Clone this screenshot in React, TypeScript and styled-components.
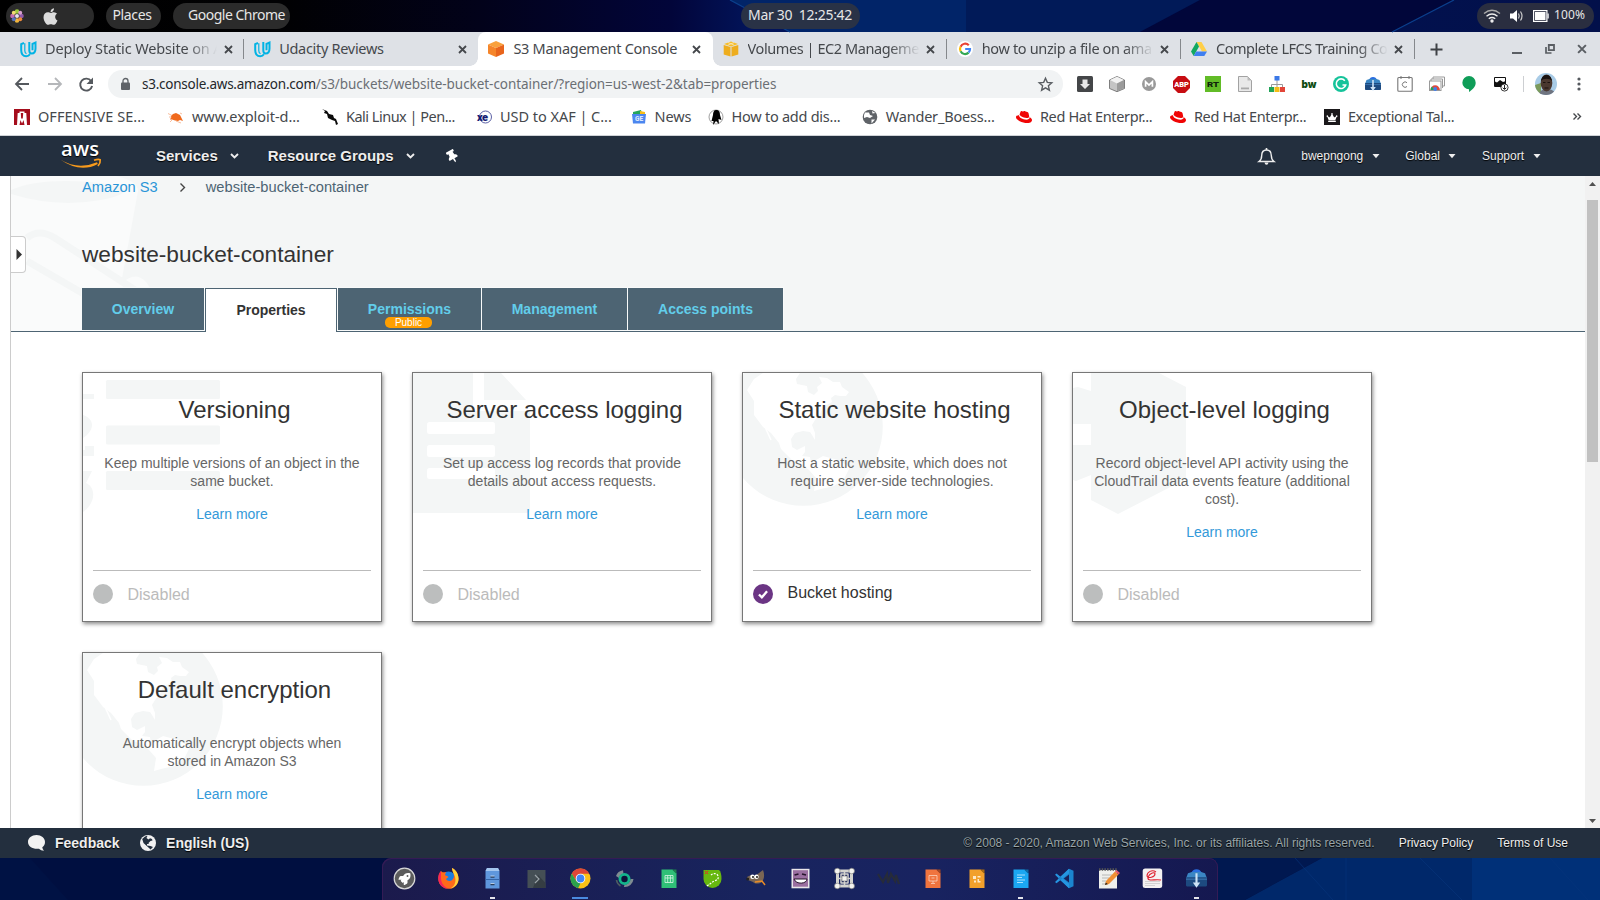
import React, { ReactNode } from "react";
import styled, { createGlobalStyle, css } from "styled-components";
import { FaApple, FaThumbtack, FaRedhat, FaCrown, FaRocket } from "react-icons/fa";

const sans = '"Liberation Sans", Arial, sans-serif';
const ui = '"Noto Sans", "Open Sans", sans-serif';

const GlobalStyle = createGlobalStyle`
  * { box-sizing: border-box; }
  html, body { margin: 0; padding: 0; overflow: hidden; }
  svg { display: block; flex: none; overflow: visible; }
`;

const Desktop = styled.div`
  width: 1600px;
  height: 900px;
  display: flex;
  flex-direction: column;
  overflow: hidden;
  background: #000a35;
  font-family: ${sans};
`;

const Label = styled.span<{ $ls?: number }>`
  white-space: pre;
  letter-spacing: ${(p) => p.$ls ?? 0}px;
`;

/* ---------- system bar ---------- */
const SystemBar = styled.div`
  position: relative;
  height: 32px;
  flex: none;
  display: flex;
  align-items: flex-start;
  padding: 3px 6px 0;
  font: 14px/24px ${ui};
  color: #e6e6e6;
`;
const Backdrop = styled.svg`
  position: absolute;
  inset: 0;
`;
const Pill = styled.div<{ $w: number; $ml?: number; $pl: number; $bg?: string }>`
  position: relative;
  display: flex;
  align-items: center;
  flex: none;
  width: ${(p) => p.$w}px;
  height: 26px;
  margin-left: ${(p) => p.$ml ?? 0}px;
  padding-left: ${(p) => p.$pl}px;
  border-radius: 13px;
  background: ${(p) => p.$bg ?? "#2b2b2b"};
  > span { margin-bottom: 2px; }
`;
const AppleIcon = styled(FaApple)`
  margin-left: 17px;
`;
const StatusIcons = styled.div`
  display: flex;
  align-items: center;
  gap: 9px;
  margin-right: 5px;
`;
const Percent = styled(Label)`
  font-size: 12px;
`;

/* ---------- browser chrome ---------- */
const TabStrip = styled.div`
  height: 34px;
  flex: none;
  display: flex;
  align-items: center;
  padding-left: 10px;
  background: #dee1e6;
  font: 14.5px/34px ${ui};
  color: #45484c;
`;
const Tab = styled.div<{ $active?: boolean; $line?: boolean }>`
  position: relative;
  width: 234.2px;
  height: 34px;
  flex: none;
  display: flex;
  align-items: center;
  padding-left: 10px;
  ${(p) =>
    p.$line &&
    css`
      &::after {
        content: "";
        position: absolute;
        right: 0;
        top: 7px;
        width: 1px;
        height: 20px;
        background: #85888c;
      }
    `}
  ${(p) =>
    p.$active &&
    css`
      background: #fff;
      border-radius: 8px 8px 0 0;
      &::before,
      &::after {
        content: "";
        position: absolute;
        bottom: 0;
        width: 8px;
        height: 8px;
      }
      &::before {
        left: -8px;
        background: radial-gradient(circle at 0 0, transparent 7.5px, #fff 8px);
      }
      &::after {
        right: -8px;
        background: radial-gradient(circle at 100% 0, transparent 7.5px, #fff 8px);
      }
    `}
`;
const Favicon = styled.div`
  width: 17px;
  flex: none;
`;
const TabTitle = styled.div<{ $fade?: boolean }>`
  width: 178.5px;
  margin-left: 8px;
  overflow: hidden;
  height: 34px;
  line-height: 32px;
  white-space: nowrap;
  ${(p) => p.$fade && css`mask-image: linear-gradient(90deg, #000 142px, transparent 172px);`}
`;
const WindowButtons = styled.div`
  flex: 1;
  display: flex;
  align-items: center;
  justify-content: space-between;
  padding: 0 13px 0 15px;
`;
const ButtonGroup = styled.div<{ $gap: number }>`
  display: flex;
  align-items: center;
  gap: ${(p) => p.$gap}px;
`;
const Toolbar = styled.div`
  height: 36px;
  flex: none;
  display: flex;
  align-items: center;
  background: #fff;
  padding: 0 19.5px 0 14px;
`;
const Omnibox = styled.div`
  width: 955px;
  height: 28px;
  margin-left: 14px;
  border-radius: 14px;
  background: #f1f3f4;
  display: flex;
  align-items: center;
  padding: 0 10.5px 0 13px;
  font: 13.5px/27px ${ui};
  color: #6b6f74;
`;
const Url = styled.div`
  flex: 1;
  margin-left: 12px;
  b { font-weight: 400; color: #24272b; }
`;
const Extensions = styled.div`
  display: grid;
  grid-template-columns: repeat(14, 32px);
  justify-items: center;
  align-items: center;
  margin-left: 6px;
`;
const Divider = styled.div`
  width: 1px;
  height: 16px;
  margin: 0 11px 0 6px;
  background: #cdcfd2;
`;
const Spacer = styled.div`
  flex: 1;
`;
const Bookmarks = styled.div`
  height: 34px;
  flex: none;
  display: flex;
  align-items: center;
  padding: 0 19px 4px 14px;
  background: #fff;
  border-bottom: 1px solid #d0d3d7;
  font: 14.5px/27px ${ui};
  color: #45484c;
`;
const Bookmark = styled.div<{ $w: number }>`
  display: flex;
  align-items: center;
  width: ${(p) => p.$w}px;
  flex: none;
  gap: 8px;
`;
const BookmarkIcon = styled.div`
  width: 16px;
  flex: none;
`;

/* ---------- console navigation ---------- */
const Nav = styled.div`
  height: 40px;
  flex: none;
  display: flex;
  align-items: center;
  background: #232f3e;
  padding: 0 59.5px 0 60px;
  color: #eee;
  text-shadow: 0 1px 1px #000;
`;
const NavMain = styled.div<{ $ml: number }>`
  display: flex;
  align-items: center;
  gap: 12px;
  margin-left: ${(p) => p.$ml}px;
  font: bold 15px/40px ${sans};
`;
const Pin = styled(FaThumbtack)`
  margin-left: 31.5px;
  transform: rotate(-30deg);
`;
const NavRight = styled.div`
  flex: 1;
  display: flex;
  justify-content: flex-end;
  align-items: center;
  gap: 25.5px;
  font: 12px/42px ${sans};
`;
const NavLink = styled.div`
  display: flex;
  align-items: center;
  gap: 8.5px;
`;

/* ---------- console page ---------- */
const Body = styled.div`
  height: 652px;
  flex: none;
  display: flex;
  background: #fff;
  overflow: hidden;
`;
const Page = styled.div`
  position: relative;
  width: 1575px;
  margin-left: 10px;
  border-left: 1px solid #ccc;
  overflow: hidden;
`;
const Handle = styled.div`
  position: absolute;
  left: -1px;
  top: 60px;
  width: 16px;
  height: 37px;
  background: #fff;
  border: 1px solid #ccc;
  border-left: 0;
  border-radius: 0 4px 4px 0;
  padding: 12px 0 0 6px;
`;
const Header = styled.div`
  position: relative;
  height: 156px;
  background: #f4f6f6;
  border-bottom: 1px solid #4d6473;
  padding-left: 71px;
  color: #333;
`;
const Bucket = styled.svg`
  position: absolute;
  left: 0;
  top: 0;
`;
const Crumbs = styled.div`
  position: relative;
  display: flex;
  align-items: center;
  height: 22px;
  font: 14.67px/22px ${sans};
  color: #4d6473;
  a { color: #2a95d8; }
  svg { margin: 0 20px 0 21px; }
`;
const BucketName = styled.div`
  position: relative;
  margin-top: 40px;
  height: 50px;
  font: 22.67px/32px ${sans};
`;
const TabRow = styled.div`
  position: relative;
  display: flex;
  gap: 1px;
  height: 44px;
`;
const PageTab = styled.div<{ $w: number; $active?: boolean }>`
  width: ${(p) => p.$w}px;
  height: 42px;
  display: flex;
  flex-direction: column;
  align-items: center;
  background: #4d6473;
  outline: 1px solid #f8fafa;
  color: #62cdea;
  font: bold 14px/42px ${sans};
  ${(p) =>
    p.$active &&
    css`
      height: 44px;
      background: #fff;
      color: #333;
      border: 1px solid #4d6473;
      border-bottom: 0;
      outline: 0;
      z-index: 1;
    `}
`;
const Badge = styled.span`
  margin: -13px 2px 0 0;
  width: 47px;
  height: 11px;
  border-radius: 5px;
  background: #ff9f00;
  color: #fff;
  font: 10px/11px ${sans};
  text-align: center;
`;
const Cards = styled.div`
  display: grid;
  grid-template-columns: repeat(4, 300px);
  gap: 30px;
  padding: 40px 0 0 71px;
`;
const Card = styled.div`
  position: relative;
  height: 250px;
  border: 1px solid #777;
  box-shadow: 1px 2px 4px rgba(0, 0, 0, 0.45);
  display: flex;
  flex-direction: column;
  background: #fff;
  padding: 0 10px;
`;
const Watermark = styled.svg`
  position: absolute;
  left: 0;
  top: 0;
  overflow: hidden;
  fill: #f4f6f6;
`;
const CardTitle = styled.div`
  position: relative;
  margin-top: 21px;
  padding-left: 5px;
  font: 24px/32px ${sans};
  color: #333;
  text-align: center;
`;
const CardText = styled.div`
  position: relative;
  margin-top: 28px;
  font: 14px/18px ${sans};
  color: #666;
  text-align: center;
  white-space: pre;
`;
const Learn = styled.div`
  position: relative;
  margin-top: 15px;
  font: 14px/18px ${sans};
  color: #3399d9;
  text-align: center;
`;
const Status = styled.div<{ $on?: boolean }>`
  position: relative;
  margin-top: auto;
  height: 51px;
  display: flex;
  gap: 14.5px;
  padding-top: 13px;
  border-top: 1px solid #bbb;
  font: 16px/20px ${sans};
  color: ${(p) => (p.$on ? "#333" : "#bbb")};
  span { margin-top: ${(p) => (p.$on ? -1 : 1)}px; }
`;
const Dot = styled.div<{ $on?: boolean }>`
  width: 20px;
  height: 20px;
  border-radius: 50%;
  background: ${(p) => (p.$on ? "#6b3584" : "#bcbebe")};
  padding: 5.5px 0 0 5px;
`;
const Scrollbar = styled.div`
  width: 15px;
  display: flex;
  flex-direction: column;
  align-items: center;
  background: #f1f1f1;
  padding: 6px 0 5px;
`;
const Thumb = styled.div`
  width: 11px;
  height: 262px;
  margin: 14px 0 auto;
  background: #c1c1c1;
`;

/* ---------- footer and dock ---------- */
const Footer = styled.div`
  height: 30px;
  flex: none;
  display: flex;
  align-items: center;
  background: #232f3e;
  padding: 0 32px 0 28px;
  color: #eee;
  font: 12px/30px ${sans};
  text-shadow: 0 1px 1px #000;
`;
const FootLink = styled.div<{ $mr?: number }>`
  display: flex;
  align-items: center;
  gap: 10px;
  margin-right: ${(p) => p.$mr ?? 0}px;
  font: bold 14px/30px ${sans};
`;
const Legal = styled.div`
  flex: 1;
  display: flex;
  justify-content: flex-end;
  gap: 24px;
`;
const Muted = styled.span`
  color: #9aa5a8;
`;
const DockArea = styled.div`
  position: relative;
  flex: 1;
  display: flex;
  justify-content: center;
  overflow: hidden;
`;
const Dock = styled.div`
  position: relative;
  width: 836px;
  height: 42px;
  display: grid;
  grid-template-columns: repeat(19, 44px);
  border-radius: 9px 9px 0 0;
  box-shadow: inset 1px 1px 0 #341b55, inset -1px 0 0 #341b55;
  background: linear-gradient(90deg, #1b1a4c, #18245e 45%, #182360 65%, #151850);
`;
const DockItem = styled.div<{ $mark?: string }>`
  display: flex;
  flex-direction: column;
  align-items: center;
  justify-content: space-between;
  padding: 10px 0 1px;
  &::after {
    content: "";
    width: ${(p) => (p.$mark === "wide" ? 16 : 5)}px;
    height: 2px;
    background: ${(p) => (p.$mark === "wide" ? "#4a8ae0" : p.$mark ? "#e4e4ea" : "transparent")};
  }
`;

/* ---------- shared drawings ---------- */
const Close = ({ c = "#45484c", s = 9 }: { c?: string; s?: number }) => (
  <svg width={s} height={s} viewBox="0 0 9 9">
    <path d="M1 1l7 7M8 1l-7 7" stroke={c} strokeWidth="1.8" />
  </svg>
);
const Udacity = () => (
  <svg width="17" height="17" viewBox="0 0 17 17" fill="none" stroke="#02b3e4" strokeWidth="2">
    <path d="M4 2L1.200 3.200v5.800c0 4 2 6.300 5 6.300 1.800 0 3-.8 3.700-2" />
    <path d="M4.800 2.200v7.500c0 1.500.6 2.500 1.700 3" strokeWidth="1.200" />
    <path d="M9.300 1v8.300c0 2 .8 3.200 2.300 3.200 2.400 0 3.900-2 3.900-5V1.500l-3 1.300v6.500" />
  </svg>
);
const Cube = ({ a, b, c }: { a: string; b: string; c: string }) => (
  <svg width="16" height="16" viewBox="0 0 16 16">
    <path d="M8 0l8 3.500L8 7 0 3.500z" fill={a} />
    <path d="M0 3.500L8 7v9l-8-3.500z" fill={b} />
    <path d="M16 3.500L8 7v9l8-3.500z" fill={c} />
  </svg>
);
const GoldCube = () => (
  <svg width="16" height="16" viewBox="0 0 16 16">
    <path d="M8 .5l7 2.500-7 2.500L1 3z" fill="#f6bd2b" />
    <path d="M.7 4l6.800 2v9.500L.7 13.500zM15.300 4l-6.800 2v9.500l6.800-2z" fill="#eead1e" />
    <path d="M5 1.500l6 2.600M11 1.500l-6 2.600" stroke="#fde9b4" strokeWidth=".8" />
  </svg>
);
const GoogleG = () => (
  <svg width="16" height="16" viewBox="0 0 16 16">
    <circle cx="8" cy="8" r="8" fill="#fff" />
    <g fill="none" strokeWidth="2.200">
      <path d="M11.800 4.200A5 5 0 0 0 3.600 5.700" stroke="#ea4335" />
      <path d="M3.600 5.700a5 5 0 0 0 0 4.600" stroke="#fbbc05" />
      <path d="M3.600 10.300a5 5 0 0 0 8 1.300" stroke="#34a853" />
      <path d="M11.600 11.600A5 5 0 0 0 13 8H8.200" stroke="#4285f4" />
    </g>
  </svg>
);
const Drive = () => (
  <svg width="16" height="16" viewBox="0 0 16 16">
    <path d="M5.500 1h5L16 10.500h-5z" fill="#ffcf48" />
    <path d="M5.500 1L8 5.400 2.700 15 0 10.500z" fill="#11a861" />
    <path d="M5.200 10.500H16L13.300 15H2.700z" fill="#3f7ff0" />
  </svg>
);
const Chevron = () => (
  <svg width="9" height="6" viewBox="0 0 9 6">
    <path d="M1 1l3.500 3.500L8 1" fill="none" stroke="#eee" strokeWidth="1.900" />
  </svg>
);
const Caret = () => (
  <svg width="8" height="5" viewBox="0 0 8 5">
    <path d="M.5 0h7L4 4.200z" fill="#eee" />
  </svg>
);
const RedHat = () => <FaRedhat size={16} color="#f00505" />;

const continents =
  "M4 17L11 6 20 0H57L53 6 54 11 64 13 65 19 71 22 75 18 74 14 79 10 76 4 84 5 90 9 97 9 99 14 106 19 103 23 97 23 92 22 88 25 89 29 80 34 77 41 72 47 69 52 72 60 72 67 69 62 67 59 60 58 52 60 48 66 49 74 54 77 58 75 62 73 62 79 59 83 67 84 68 90 80 83 95 87 107 94 101 106 91 113 78 116 71 118 73 105 66 97 59 91 50 88 44 82 38 76 36 70 28 60 20 54 11 42 11 28z";

const GlobeMark = () => (
  <Watermark width="150" height="150" viewBox="0 0 150 150">
    <circle cx="60.300" cy="53.300" r="79.500" />
    <path d={continents} fill="#fff" />
    <path d="M22 54l6 13" stroke="#fff" strokeWidth="1.500" />
  </Watermark>
);
const ListMark = () => (
  <Watermark width="150" height="150" viewBox="0 0 150 150">
    <rect x="23" y="7" width="114" height="19" rx="1.500" />
    <rect x="23" y="52.500" width="114" height="19" rx="1.500" />
    <rect x="23" y="98" width="114" height="19" rx="1.500" />
    <path d="M0 21h11v5H0zM0 42c12 4 12 15 0 23zM0 77h2v-4h9v10H0zM0 98h9L3 110c11 5 9 21-3 29zM0 115l3 1-3 3z" />
  </Watermark>
);
const DocMark = () => (
  <Watermark width="150" height="150" viewBox="0 0 150 150">
    <path d="M0 0h60v38h57v98q0 4-4 4H0zM71 0h17l25 27H71z" />
    <g fill="#fff">
      <rect x="14" y="49" width="68" height="12" rx="2.500" />
      <rect x="14" y="72" width="68" height="12" rx="2.500" />
      <rect x="14" y="95" width="68" height="11" rx="2.500" />
    </g>
  </Watermark>
);
const CubeMark = () => (
  <Watermark width="150" height="150" viewBox="0 0 150 150">
    <path d="M18 0h68l27 14v92l-68 35-27-14v-25l-15 6-3-1V72h18V51H0V15l5-1 13 4z" />
  </Watermark>
);

const cards: { title: string; text: string; mark: ReactNode; on?: boolean }[] = [
  { title: "Versioning", text: "Keep multiple versions of an object in the\nsame bucket.", mark: <ListMark /> },
  { title: "Server access logging", text: "Set up access log records that provide\ndetails about access requests.", mark: <DocMark /> },
  { title: "Static website hosting", text: "Host a static website, which does not\nrequire server-side technologies.", mark: <GlobeMark />, on: true },
  { title: "Object-level logging", text: "Record object-level API activity using the\nCloudTrail data events feature (additional\ncost).", mark: <CubeMark /> },
  { title: "Default encryption", text: "Automatically encrypt objects when\nstored in Amazon S3", mark: <GlobeMark /> },
];

const S = ({ children, w = 16 }: { children: ReactNode; w?: number }) => (
  <svg width={w} height={w} viewBox="0 0 16 16">{children}</svg>
);
const glyph = (t: string, x: number, y: number, size: number, fill: string, extra = {}) => (
  <text x={x} y={y} fontSize={size} fill={fill} fontFamily="Roboto, sans-serif" fontWeight={900} textAnchor="middle" {...extra}>{t}</text>
);
const Toolbox = ({ w = 16 }: { w?: number }) => (
  <S w={w}>
    <path d="M4 4q1-3 4-3t4 3z" fill="#2a6ee0" />
    <path d="M1.500 4l3-1h7l3 1L16 8H0z" fill="#3b86c4" />
    <rect x="0" y="7" width="16" height="7" rx=".8" fill="#1d4a80" />
    <path d="M0 8.500h16" stroke="#3d79b4" strokeWidth=".8" />
    <path d="M7.200 4h1.600v7h2L8 15l-2.800-4h2z" fill="#cfe3f5" />
  </S>
);

const extensions: ReactNode[] = [
  <S><rect width="16" height="16" rx="1.500" fill="#444648" /><path d="M5.500 3.500h5V8H13l-5 5-5-5h2.500z" fill="#e8e8e8" /></S>,
  <S><path d="M8 .5L15.500 4v8.500L8 15.700.5 12.500V4z" fill="#c4c4c4" stroke="#666" strokeWidth=".8" /><path d="M8 .8L15 4 8 7.500 1 4z" fill="#f2f2f2" /><path d="M8 7.500l7-3.400v8L8 15.300z" fill="#9b9b9b" /></S>,
  <S><circle cx="8" cy="8" r="7" fill="#999" /><path d="M4.600 10.800V5.700L8 9l3.400-3.300v5.100" fill="none" stroke="#fff" strokeWidth="1.700" /></S>,
  <S w={17}><path d="M4.700 0h6.600L16 4.700v6.600L11.300 16H4.700L0 11.300V4.700z" fill="#c70d12" />{glyph("ABP", 8, 10.700, 7, "#fff")}</S>,
  <S><rect width="16" height="16" fill="#62bc27" />{glyph("RT", 8, 10.700, 8, "#10240a", { textLength: 12, lengthAdjust: "spacingAndGlyphs" })}</S>,
  <S><path d="M1.500.5h9l4 4v11h-13z" fill="#e9e9e9" stroke="#999" strokeWidth=".9" /><path d="M10.500.5v4h4z" fill="#bbb" /><path d="M4 11.500h8v1.800H4z" fill="#aaa" /></S>,
  <S><path d="M8 4v4M2.500 12V8.500h11V12M8 8v4" stroke="#999" fill="none" /><rect x="5.500" y="0" width="5" height="4.500" fill="#3b78e7" /><rect x="0" y="11" width="5" height="5" fill="#20a357" /><rect x="5.500" y="11" width="5" height="5" fill="#f4bd16" /><rect x="11" y="11" width="5" height="5" fill="#e24538" /></S>,
  <S>{glyph("bw", 8, 12.300, 11, "#0f4d12", { fontFamily: "Inter, sans-serif", textLength: 15, lengthAdjust: "spacingAndGlyphs" })}</S>,
  <S><circle cx="8" cy="8" r="8" fill="#15c39a" /><path d="M11.800 4.700A4.800 4.800 0 1 0 12.700 9H9.500" fill="none" stroke="#fff" strokeWidth="1.600" /></S>,
  <Toolbox />,
  <S><rect x=".8" y="1.500" width="14.400" height="13.800" rx="1" fill="#fff" stroke="#777" strokeWidth="1.100" /><path d="M4 0v3M12 0v3" stroke="#777" /><path d="M10 6.700A2.700 2.700 0 1 0 10 10.500" fill="none" stroke="#777" /></S>,
  <S><path d="M4 3V1h11.500v9H14" fill="#fff" stroke="#999" /><path d="M2 5V3h11.500v9" fill="#fff" stroke="#999" /><rect x=".5" y="5" width="11.500" height="9.500" fill="#fff" stroke="#999" /><path d="M1.500 14a4.700 4.700 0 0 1 9.400 0z" fill="#dd4b3e" /><path d="M1.500 14a4.700 4.700 0 0 1 1.500-3.500L5 14z" fill="#20a357" /><circle cx="6.200" cy="13" r="1.900" fill="#3f80ee" /></S>,
  <S><path d="M8 0a6.700 6.700 0 0 1 6.700 6.800C14.700 11 11 14 8 16v-2.700A6.600 6.600 0 1 1 8 0z" fill="#0f9d58" /></S>,
  <S><path d="M1.500 1.500h11v7l-3 2h-8z" fill="#fff" stroke="#111" strokeWidth="1" /><path d="M1 5l3 1.500L7 4l3 2 3-1v5H1z" fill="#111" /><circle cx="11.500" cy="11.500" r="3.600" fill="#fff" stroke="#222" strokeWidth=".9" /><path d="M11.500 9v4M9.700 11.700l1.800 1.800 1.800-1.800" stroke="#222" fill="none" /></S>,
];

/* icon, text, letter spacing, slot width */
const bookmarks: [ReactNode, string, number, number][] = [
  [<S><rect width="16" height="16" fill="#a50d1c" /><path d="M3 16l.7-12H5.500V2.500h5V4h1.800L13 16h-2.500L9.500 11 8 14.500 6.500 11 5.500 16z" fill="#fff" /><path d="M6.800 4h2.400L8.800 9.500H7.200z" fill="#a50d1c" /></S>, "OFFENSIVE SE...", 0.03, 154],
  [<S><path d="M3 7l2-2 3-1 4 2 1.500 3 1.500 3-3-1-2 1-3-.5-3-1-2 0 1-2z" fill="#f06a1d" /><path d="M0 4.500l4 2M4 11l-2 2M12 4l2 1M1 8h3M8 12l5 2" stroke="#f5a273" strokeWidth=".7" /></S>, "www.exploit-d...", -0.05, 154],
  [<S><path d="M0 0l5 2 2 3 4 1 1 3 2 1 2 5-2 1-1-4-3-1-4-2-1-4-3-1 1-2z" fill="#0a0a0a" /></S>, "Kali Linux | Pen...", -0.5, 154],
  [<S><circle cx="9.500" cy="8" r="6" fill="none" stroke="#5b60a5" />{glyph("xe", 6.500, 11.500, 11, "#161d74", { textLength: 11 })}</S>, "USD to XAF | C...", -0.03, 154.5],
  [<S><path d="M2 3l8-2 1 4H2z" fill="#25a55b" /><path d="M9 2l5 1v3H9z" fill="#f9bd16" /><path d="M1 5h14l-1 9.500H2z" fill="#4b86ef" />{glyph("GE", 8, 12, 6.500, "#dce8fd")}</S>, "News", -0.066, 77],
  [<S><circle cx="8" cy="8" r="7" fill="#fff" stroke="#888" strokeWidth=".8" /><path d="M8 1c3 0 4 2 4 5l1.500 5-3-1L11 15 8 12l-3 4 .5-4-2 0L5 6c0-3 1-5 3-5z" fill="#000" /></S>, "How to add dis...", -0.25, 154.2],
  [<S><circle cx="8" cy="8" r="7.300" fill="#5f6368" /><path d="M3 3.500h4L8 6l3 1-3 2-3-1-3 1V6z" fill="#fff" /><path d="M9.500 10.500h3.500l-3.500 4zM10 2l3.500 2-3 .5z" fill="#fff" /></S>, "Wander_Boess...", -0.19, 154.2],
  [<RedHat />, "Red Hat Enterpr...", -0.33, 154],
  [<RedHat />, "Red Hat Enterpr...", -0.33, 154],
  [<S><rect width="16" height="16" fill="#1a181a" /><g transform="translate(2.500 3)"><FaCrown size={11} color="#fff" /></g></S>, "Exceptional Tal...", -0.32, 154],
];

const docIcon = (c: string, d: string, inner: ReactNode) => (
  <svg width="21" height="21" viewBox="0 0 21 21">
    <path d="M3.500 1.500h11l4 4v14.500h-15z" fill={c} />
    <path d="M14 1.500h4.500V6z" fill={d} />
    {inner}
  </svg>
);
const D = ({ children }: { children: ReactNode }) => (
  <svg width="21" height="21" viewBox="0 0 21 21">{children}</svg>
);

const dock: [ReactNode, string?][] = [
  [<D><circle cx="10.500" cy="10.500" r="10.300" fill="#5c5c5c" stroke="#d8d8d8" strokeWidth="1.200" /><g transform="translate(4.500 5)"><FaRocket size={12} color="#fff" /></g></D>],
  [<D><circle cx="10.500" cy="11" r="7.500" fill="#1a7fe0" /><path d="M3 3C1 5 0 8 .4 12c.6 5 5 8.800 10.200 8.800 5.500 0 9.900-4.300 10-9.900C20.500 6 18 2 14 0c0 2 1 3 1.500 5 1 3 .5 6-2 7.500-2 1-4.500.5-5.500-1.500l2.500-2c-1-1.500-3-1-3.500-2l1-3C6 4 4.500 5 3 3z" fill="#ff6a1a" /><path d="M14 0c4 2 6.500 6 6.500 10.800 0 5-3.500 8.900-8 9.800 5-3 6-8 4-13C15.500 5 14 3 14 0z" fill="#ffd33a" /><path d="M3 3C1 5 0 8 .4 12c.6 5 5 8.800 10.200 8.800C6 19 3 15 3 10z" fill="#f5245a" /></D>],
  [<D><path d="M5 0h11l1.500 3v17.500h-14V3z" fill="#5f97dd" /><path d="M5 0h11l1.500 3h-14z" fill="#a4c6ef" /><path d="M3.500 11.500h14" stroke="#3566a9" /><path d="M8.500 9h4M8.500 16.500h4" stroke="#2d3f5c" strokeWidth="1.300" /><path d="M8.500 8h4M8.500 15.500h4" stroke="#dfe9f5" strokeWidth=".7" /></D>, "dot"],
  [<D><rect x="1.500" y="2" width="18" height="18" fill="#454f55" /><path d="M12 7l7.500 8v5H7z" fill="#353d43" /><path d="M9 7l4 4-4 4" fill="none" stroke="#9aa3a8" strokeWidth="1.200" /></D>],
  [<D><circle cx="10.500" cy="10.500" r="10" fill="#fbc116" /><path d="M10.500.5a10 10 0 0 1 8.800 5.200H10.500L6 13 1.800 5.600A10 10 0 0 1 10.500.500z" fill="#df4637" /><path d="M1.800 5.600L6.200 13l4.300 2.500-2.500 4.700A10 10 0 0 1 1.800 5.600z" fill="#2ba24c" /><circle cx="10.500" cy="10.500" r="4.800" fill="#fff" /><circle cx="10.500" cy="10.500" r="3.900" fill="#4285f4" /></D>, "wide"],
  [<D><path d="M9 2.300A8.700 8.700 0 0 0 2 8l3 2a6 6 0 0 1 4.500-4zM16.500 11h3a8.700 8.700 0 0 1-9.500 8l.5-2.500a6 6 0 0 0 6-5.500z" fill="#7f8c92" /><path d="M2.500 12a8 8 0 0 0 4 6" fill="none" stroke="#4f5c62" strokeWidth="1.600" /><circle cx="10.500" cy="11" r="4.600" fill="#0d1338" stroke="#14b58b" strokeWidth="2.800" /></D>],
  [docIcon("#2fc077", "#1b7f4d", <path d="M7 7.500h8v7H7zM7 10h8M9.700 7.500v7M12.400 7.500v7" fill="none" stroke="#d8f5e6" strokeWidth=".8" />)],
  [<D><path d="M1.500 2H17q2.500 2 2.500 9a9 9 0 0 1-18 0z" fill="#67b80f" /><path d="M5 18l7-5c3-1 5-2 4-5s-5-3-7-1" fill="none" stroke="#fff" strokeDasharray="2 1.200" strokeWidth="1.200" /><path d="M3 3l3 3M6 3L3 6" stroke="#e22" /></D>],
  [<D><path d="M1 9l4-2 4 1 8-6c2 5 1 9-1 12-3 2-7 2-9 0l-5-2z" fill="#7a6654" /><circle cx="6.500" cy="8.800" r="2.200" fill="#fff" /><circle cx="10.500" cy="8.800" r="2.200" fill="#fff" /><circle cx="7" cy="9" r=".9" /><circle cx="11" cy="9" r=".9" /><circle cx="1.700" cy="11" r="1.500" fill="#222" /><path d="M9 14l7-1 3 4" stroke="#e98b28" strokeWidth="1.500" fill="none" /></D>],
  [<D><rect x="1.500" y=".8" width="18" height="19.500" fill="#e9e6e9" /><rect x="3" y="2.200" width="15" height="16.500" fill="#9a6fa0" /><path d="M4.500 7l4-1M12 6l4 1" stroke="#26142b" strokeWidth="1.700" /><path d="M4 11h13c0 5-11 6-13 0z" fill="#fff" stroke="#26142b" /></D>],
  [<D><g fill="none" stroke="#d4d4cf"><path d="M3.500 3h14M3.500 18h14M3.500 3v15M17.500 3v15" strokeWidth="3" /><path d="M6.500 6h8M6.500 15h8M7 6v9M14 6v9M10.500 3v15M3 10.500h15" strokeWidth="1.500" /></g><g fill="#f4f4f0" stroke="#777" strokeWidth=".6"><circle cx="3.300" cy="3" r="2.800" /><circle cx="17.700" cy="3" r="2.800" /><circle cx="3.300" cy="18" r="2.800" /><circle cx="17.700" cy="18" r="2.800" /><rect x="8" y="8" width="5" height="5" /></g></D>],
  [<D><path d="M0 6l5 8 4-8 1 9 3-9 4 7 1-6 3 9" fill="none" stroke="#262b3a" strokeWidth="2.200" /></D>],
  [docIcon("#f0743e", "#a44621", <path d="M7 7.500h8v5.500H7zM11 13v2M9 15.500h4M9.500 10h3" fill="none" stroke="#fbd3c0" strokeWidth=".8" />)],
  [docIcon("#f2a02b", "#a86a12", <path d="M7 8h3v3H7zM11.500 8h3v1.500h-3zM8 12.500h2v2H8zM11.500 11h1.500v3.500h-1.500zM13 13h1.500v1.500H13z" fill="#fde8c6" />)],
  [docIcon("#1ba7f2", "#0d6ba6", <path d="M7 7h8M7 9.500h5M7 12h8M7 14.500h6" stroke="#b9e6fd" strokeWidth=".9" />), "dot"],
  [<D><path d="M15 .8l4.500 2v15.500l-4.500 2L4.500 10.500z" fill="#1b85cf" /><path d="M1 6.800l1.500-1.300L15 15.800V20.300zM1 14l1.500 1.300L15 5.300V.8z" fill="#2596e2" /><path d="M15 6.500v8l-5.200-4z" fill="#18215c" /></D>],
  [<D><path d="M1 2h18v18.500H1z" fill="#efefec" /><path d="M1 1.500h18" stroke="#555" strokeWidth="2.500" strokeDasharray="1.500 1.200" /><path d="M4 7h10M4 10h7M4 13h4M4 16h6" stroke="#aaa" strokeWidth=".8" /><path d="M7 17l1-4 9-9.500 3.500 3L11 16z" fill="#ef8f34" /><path d="M17 3.500l1.500-1.500 3.500 3-1.500 1.500z" fill="#e0556a" /><path d="M7 17l.8-2.600 2 1.700z" fill="#222" /></D>],
  [<D><rect x=".7" y=".5" width="19.500" height="19.500" rx="2.500" fill="#f4f1f1" /><path d="M3 13.500h15M3 15.500h15M3 17.500h10" stroke="#ccc" strokeWidth=".8" /><path d="M14 4C10 1 5 4 5 8c1 3 8 1 8-2 0-2.500-5-1-7 3-1 5 6 2 13 3" fill="none" stroke="#e0222f" strokeWidth="1.100" /></D>],
  [<Toolbox w={21} />, "dot"],
];

const pageTabs: [string, number, boolean?][] = [
  ["Overview", 122], ["Properties", 132, true], ["Permissions", 143], ["Management", 145], ["Access points", 155],
];

export default function App() {
  return (
    <Desktop>
      <GlobalStyle />
      <SystemBar>
        <Backdrop width="1600" height="32" viewBox="0 0 1600 32">
          <defs>
            <linearGradient id="sky"><stop offset="0" stopColor="#000" /><stop offset=".18" stopColor="#010103" /><stop offset=".3" stopColor="#02021a" /><stop offset=".42" stopColor="#02053a" /><stop offset=".47" stopColor="#02145a" /><stop offset="1" stopColor="#02104a" /></linearGradient>
          </defs>
          <rect width="1600" height="32" fill="url(#sky)" />
          <path d="M730 0h236v32H790z" fill="#012468" />
          <path d="M966 0h234l-60 32H966z" fill="#011a58" />
          <path d="M1200 0h254l-62 32h-252z" fill="#01063a" />
          <path d="M1454 0l-62 32M730 0l60 32" stroke="#0b3f8c" strokeWidth="1.300" />
        </Backdrop>
        <Pill $w={88} $pl={4}>
          <svg width="14" height="14" viewBox="0 0 14 14">
            <circle cx="7" cy="2.500" r="2.300" fill="#9ccb3b" /><circle cx="11.500" cy="7" r="2.300" fill="#8f5aa8" /><circle cx="7" cy="11.500" r="2.300" fill="#f0b63c" /><circle cx="2.500" cy="7" r="2.300" fill="#c46bb0" />
            <circle cx="3.800" cy="3.800" r="2" fill="#f2dc72" /><circle cx="10.200" cy="3.800" r="2" fill="#d8a0cf" /><circle cx="10.200" cy="10.200" r="2" fill="#f08c3c" /><circle cx="3.800" cy="10.200" r="2" fill="#5570b8" /><circle cx="7" cy="7" r="2" fill="#e9e1ef" />
          </svg>
          <AppleIcon size={19} color="#dcdcdc" />
        </Pill>
        <Pill $w={55} $ml={12} $pl={6.500}><Label $ls={-0.378}>Places</Label></Pill>
        <Pill $w={117} $ml={12} $pl={15}><Label $ls={-0.489}>Google Chrome</Label></Pill>
        <Pill $w={119} $ml={451} $pl={7} $bg="#293246"><Label $ls={-0.302}>Mar 30  12:25:42</Label></Pill>
        <Pill $w={117} $ml={617} $pl={6} $bg="#2a2e40">
          <StatusIcons>
            <svg width="18" height="14" viewBox="0 0 18 14" fill="none" stroke="#eee" strokeWidth="1.400">
              <path d="M1 4.500Q9-2 17 4.500" stroke="#aaa" /><path d="M3.500 7.300q5.500-4.500 11 0M5.800 9.800q3.200-2.600 6.400 0" /><circle cx="9" cy="12" r="1" fill="#fff" />
            </svg>
            <svg width="14" height="12" viewBox="0 0 14 12">
              <path d="M0 3.500h3L7 0v12L3 8.500H0z" fill="#fff" /><path d="M8.500 3.500q1.500 2.500 0 5M10.500 1.500q3 4.500 0 9" stroke="#ccc" fill="none" strokeWidth="1.200" />
            </svg>
            <svg width="16" height="12" viewBox="0 0 16 12">
              <rect x=".6" y=".6" width="13.300" height="10.800" fill="none" stroke="#fff" strokeWidth="1.200" /><rect x="2" y="2" width="10.500" height="8" fill="#fff" /><path d="M14.500 3.500h1.200v5h-1.200z" fill="#fff" />
            </svg>
          </StatusIcons>
          <Percent $ls={0.1}>100%</Percent>
        </Pill>
      </SystemBar>

      <TabStrip>
        <Tab $line><Favicon><Udacity /></Favicon><TabTitle $fade><Label $ls={-0.14}>Deploy Static Website on A</Label></TabTitle><Close /></Tab>
        <Tab><Favicon><Udacity /></Favicon><TabTitle><Label $ls={-0.3}>Udacity Reviews</Label></TabTitle><Close /></Tab>
        <Tab $active><Favicon><Cube a="#f9a13c" b="#f5852a" c="#e8641c" /></Favicon><TabTitle><Label $ls={-0.28}>S3 Management Console</Label></TabTitle><Close /></Tab>
        <Tab $line><Favicon><GoldCube /></Favicon><TabTitle $fade><Label $ls={-0.42}>Volumes | EC2 Manageme</Label></TabTitle><Close /></Tab>
        <Tab $line><Favicon><GoogleG /></Favicon><TabTitle $fade><Label $ls={-0.35}>how to unzip a file on ama</Label></TabTitle><Close /></Tab>
        <Tab $line><Favicon><Drive /></Favicon><TabTitle $fade><Label $ls={-0.45}>Complete LFCS Training Co</Label></TabTitle><Close /></Tab>
        <WindowButtons>
          <svg width="13" height="13" viewBox="0 0 13 13"><path d="M6.500.5v12M.5 6.500h12" stroke="#3f4246" strokeWidth="2" /></svg>
          <ButtonGroup $gap={22.500}>
            <svg width="10" height="10" viewBox="0 0 10 10"><path d="M0 9h10" stroke="#5a5e63" strokeWidth="2" /></svg>
            <svg width="10" height="10" viewBox="0 0 10 10" fill="none" stroke="#5a5e63"><path d="M3.800 1h5.200v5.200H3.800z" strokeWidth="1.800" /><path d="M1 3v6h5.500" strokeWidth="1.700" /></svg>
            <Close c="#5a5e63" s={10} />
          </ButtonGroup>
        </WindowButtons>
      </TabStrip>

      <Toolbar>
        <ButtonGroup $gap={16.500}>
          <svg width="16" height="14" viewBox="0 0 16 14"><path d="M15 7H2M8 1L2 7l6 6" fill="none" stroke="#55595e" strokeWidth="1.800" /></svg>
          <svg width="16" height="14" viewBox="0 0 16 14"><path d="M1 7h13M8 1l6 6-6 6" fill="none" stroke="#b5b7ba" strokeWidth="1.800" /></svg>
          <svg width="15" height="15" viewBox="0 0 15 15"><path d="M12.200 4.200A6 6 0 1 0 13.100 9" fill="none" stroke="#55595e" strokeWidth="1.900" /><path d="M14 .5V7H7.500z" fill="#55595e" /></svg>
        </ButtonGroup>
        <Omnibox>
          <svg width="9" height="12" viewBox="0 0 9 12"><rect y="4.500" width="9" height="7.500" rx="1" fill="#5f6368" /><path d="M2 5V3a2.500 2.500 0 0 1 5 0v2" fill="none" stroke="#5f6368" strokeWidth="1.300" /></svg>
          <Url><b><Label $ls={-0.245}>s3.console.aws.amazon.com</Label></b><Label $ls={-0.053}>/s3/buckets/website-bucket-container/?region=us-west-2&amp;tab=properties</Label></Url>
          <svg width="15" height="14" viewBox="0 0 15 14"><path d="M7.500 1.200l1.800 4.200 4.500.4-3.400 3 1 4.400-3.900-2.300-3.900 2.300 1-4.400-3.400-3 4.500-.4z" fill="none" stroke="#5a5e63" strokeWidth="1.400" /></svg>
        </Omnibox>
        <Extensions>{extensions.map((e, i) => <React.Fragment key={i}>{e}</React.Fragment>)}</Extensions>
        <Divider />
        <svg width="22" height="22" viewBox="0 0 22 22">
          <clipPath id="face"><circle cx="11" cy="11" r="11" /></clipPath>
          <g clipPath="url(#face)"><rect width="22" height="22" fill="#a8cbe6" /><path d="M0 12l6-2v12H0z" fill="#7b9a5c" /><path d="M4 22c0-4 4-6 8-6s8 2 9 6z" fill="#6f7480" /><ellipse cx="11.500" cy="10" rx="5.800" ry="8.500" fill="#4a372f" /><path d="M6 8c1-8 10-8 11 0-2-3-9-3-11 0z" fill="#18110f" /><path d="M8 9.500h2.500M12.500 9.500H15M9.500 15h4" stroke="#1c1210" /></g>
        </svg>
        <Spacer />
        <svg width="4" height="14" viewBox="0 0 4 14" fill="#55595e"><circle cx="2" cy="2" r="1.600" /><circle cx="2" cy="7" r="1.600" /><circle cx="2" cy="12" r="1.600" /></svg>
      </Toolbar>

      <Bookmarks>
        {bookmarks.map(([icon, text, ls, w], i) => (
          <Bookmark key={i} $w={w}><BookmarkIcon>{icon}</BookmarkIcon><Label $ls={ls}>{text}</Label></Bookmark>
        ))}
        <Spacer />
        <svg width="8" height="7" viewBox="0 0 8 7" fill="none" stroke="#45484c" strokeWidth="1.400"><path d="M.5.500l3 3-3 3M4.500.500l3 3-3 3" /></svg>
      </Bookmarks>

      <Nav>
        <svg width="42" height="26" viewBox="0 0 42 26">
          <text x="1" y="13" fontFamily="Open Sans, sans-serif" fontWeight="600" fontSize="20.500" fill="#fff" textLength="38" lengthAdjust="spacingAndGlyphs">aws</text>
          <path d="M.3 16.600Q18 27.500 37 19.300l.8 1.700Q20 30.500.3 16.600z" fill="#f79a1c" />
          <path d="M34 17.300q4.200-1.600 6.200-.5.500 3-2.200 6.200" fill="none" stroke="#f79a1c" strokeWidth="1.700" />
        </svg>
        <NavMain $ml={54}><Label>Services</Label><Chevron /></NavMain>
        <NavMain $ml={29}><Label>Resource Groups</Label><Chevron /></NavMain>
        <Pin size={13} color="#fff" />
        <NavRight>
          <svg width="17.500" height="17" viewBox="0 0 17.500 17"><path d="M1 13.500c2-1.500 2.700-3 2.700-6C3.700 4 5.500 2 8.500 2s4.800 2 4.800 5.500c0 3 .7 4.500 2.700 6z" fill="none" stroke="#eee" strokeWidth="1.400" /><path d="M6.500 14.500h4q-.3 2.300-2 2.300t-2-2.300zM7.700 0h1.600v2H7.700z" fill="#eee" /></svg>
          <NavLink><Label>bwepngong</Label><Caret /></NavLink>
          <NavLink><Label>Global</Label><Caret /></NavLink>
          <NavLink><Label>Support</Label><Caret /></NavLink>
        </NavRight>
      </Nav>

      <Body>
        <Page>
          <Header>
            <Bucket width="160" height="155" viewBox="0 0 160 155">
              <path d="M0 0h105q22 5 22 15L110 108q14-14 25-2 8 10 3 16L115 155H0z" fill="#fafbfb" />
              <path d="M0 18q45 14 90 6 26-5 24-11Q95 5 55 5 20 5 0 14z" fill="#f4f6f6" />
              <path d="M16 62q12-10 28 0l86 56M16 85l62 36" fill="none" stroke="#f4f6f6" strokeWidth="7" />
            </Bucket>
            <Crumbs>
              <Label as="a">Amazon S3</Label>
              <svg width="7" height="9" viewBox="0 0 7 9"><path d="M1.500.5l4 4-4 4" fill="none" stroke="#444" strokeWidth="1.400" /></svg>
              <Label>website-bucket-container</Label>
            </Crumbs>
            <BucketName>website-bucket-container</BucketName>
            <TabRow>
              {pageTabs.map(([t, w, a]) => (
                <PageTab key={t} $w={w} $active={a}>{t}{t === "Permissions" && <Badge>Public</Badge>}</PageTab>
              ))}
            </TabRow>
          </Header>
          <Handle><svg width="7" height="11" viewBox="0 0 7 11"><path d="M.5 0L6 5.500.5 11z" fill="#333" /></svg></Handle>
          <Cards>
            {cards.map((c) => (
              <Card key={c.title}>
                {c.mark}
                <CardTitle>{c.title}</CardTitle>
                <CardText>{c.text}</CardText>
                <Learn>Learn more</Learn>
                <Status $on={c.on}>
                  <Dot $on={c.on}>{c.on && <svg width="10" height="9" viewBox="0 0 11 10"><path d="M1 5l3.200 3.200L10 1.500" fill="none" stroke="#fff" strokeWidth="2.600" /></svg>}</Dot>
                  <span>{c.on ? "Bucket hosting" : "Disabled"}</span>
                </Status>
              </Card>
            ))}
          </Cards>
        </Page>
        <Scrollbar>
          <svg width="7" height="4" viewBox="0 0 7 4"><path d="M0 4l3.500-4L7 4z" fill="#505050" /></svg>
          <Thumb />
          <svg width="7" height="4" viewBox="0 0 7 4"><path d="M0 0h7L3.500 4z" fill="#505050" /></svg>
        </Scrollbar>
      </Body>

      <Footer>
        <FootLink $mr={20.500}>
          <svg width="17" height="16" viewBox="0 0 17 16"><path d="M8.500 0C13.300 0 17 3 17 7c0 2.500-1 4-2.700 5.300.2 1.500.9 2.600 1.700 3.400-2 0-3.800-.7-5-2C5 14.500 0 11.500 0 7c0-4 3.700-7 8.500-7z" fill="#f2f2f2" /></svg>
          <Label>Feedback</Label>
        </FootLink>
        <FootLink>
          <svg width="16" height="16" viewBox="0 0 16 16"><circle cx="8" cy="8" r="8" fill="#f2f2f2" /><path d="M2.200 4L5 1.500 7.500.8 6.500 3l2 1.500L10 3.200 12 4l.5 1.500-2 .5L8.500 8l.3 1-1.800 0L7 10.500l3.500.5L13 12l-2.500 2.500L9 13 6.500 10.800 3.500 8z" fill="#232f3e" /></svg>
          <Label $ls={-0.02}>English (US)</Label>
        </FootLink>
        <Legal>
          <Muted>© 2008 - 2020, Amazon Web Services, Inc. or its affiliates. All rights reserved.</Muted>
          <Label>Privacy Policy</Label>
          <Label>Terms of Use</Label>
        </Legal>
      </Footer>

      <DockArea>
        <Backdrop width="1600" height="42" viewBox="0 0 1600 42">
          <rect width="400" height="42" fill="#000f40" />
          <path d="M0 0h30l38 42H0z" fill="#001244" />
          <path d="M1200 0h122l-77 42h-45z" fill="#001850" />
          <path d="M1322 0h150v42h-227z" fill="#00286a" />
          <path d="M1472 0h128v42h-128z" fill="#003078" />
          <path d="M1295 0l38 42M1420 0l42 42M1550 0l38 42M1346 0v42" stroke="#07357c" strokeWidth="1" opacity=".6" />
        </Backdrop>
        <Dock>{dock.map(([icon, mark], i) => <DockItem key={i} $mark={mark}>{icon}</DockItem>)}</Dock>
      </DockArea>
    </Desktop>
  );
}
